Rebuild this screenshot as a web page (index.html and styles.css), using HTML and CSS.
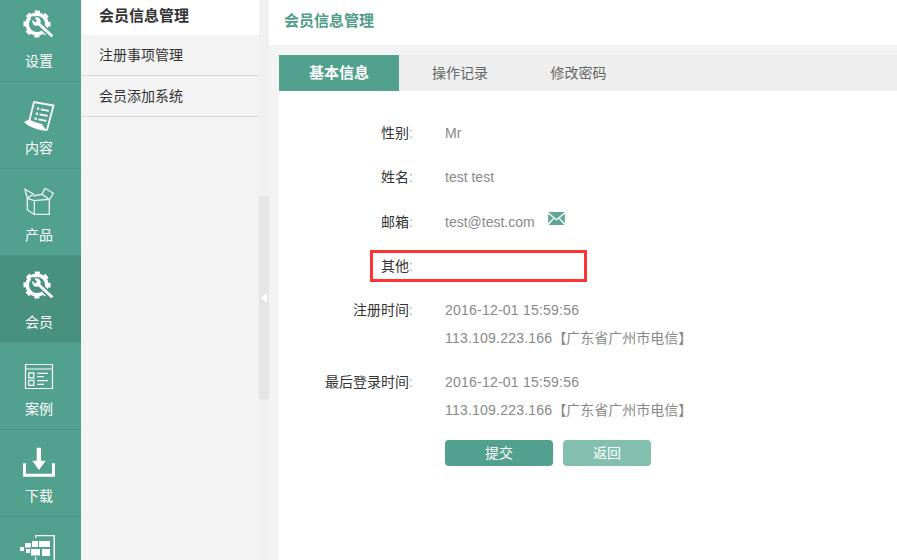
FILE: index.html
```html
<!DOCTYPE html>
<html lang="zh-CN">
<head>
<meta charset="utf-8">
<title>会员信息管理</title>
<link rel="stylesheet" href="styles.css">
</head>
<body>
<svg class="sprite" aria-hidden="true">
  <defs>
    <g id="gear">
      <circle class="gear-ring" cx="17" cy="18" r="9.800"/>
      <circle class="gear-teeth" cx="17" cy="18" r="12.200"/>
      <path class="wrench-gap" d="M19 18 33 31"/>
      <path class="wrench-handle" d="M19 18 32 30"/>
      <circle class="wrench-head" cx="16.500" cy="15.500" r="4.200"/>
      <path class="wrench-jaw" d="M10 11 13.500 10 17 15 15 16.500 Z"/>
      <circle class="wrench-end" cx="33" cy="31" r="1.200"/>
    </g>
  </defs>
</svg>
<div class="app">
  <nav class="rail">
    <ul class="rail-list">
      <li class="rail-item">
        <svg class="rail-icon" viewBox="0 0 36 40"><use href="#gear"/></svg>
        <span>设置</span>
      </li>
      <li class="rail-item">
        <svg class="rail-icon" viewBox="0 0 36 40">
          <path class="ico-line-bold" d="M9.500 27 14 9 33.500 12.500 27 37"/>
          <path class="ico-fill" d="M4 29 9 26.500C13 29 18 30 22 31 23 33 25 36 27.500 38 17 37 9 34 4 29Z"/>
          <path class="ico-fill" d="M17 14.500h2.200v2.200H17ZM21 15.500l8 1.500-.4 1.800-8-1.500ZM15.800 19.500H18v2.200h-2.200ZM19.800 20.500l8 1.500-.4 1.800-8-1.500ZM14.600 24.500h2.200v2.200h-2.200ZM18.600 25.500l8 1.500-.4 1.800-8-1.500Z"/>
        </svg>
        <span>内容</span>
      </li>
      <li class="rail-item">
        <svg class="rail-icon" viewBox="0 0 36 40">
          <path class="ico-line ico-soft" d="M7.300 18.300V30L14.300 34.300H29.300V19.300L14.300 20.600 7.300 18.300ZM14.300 20.600V34.300M5 9.300 13.300 14 7.500 18.300ZM5 9.300 7.300 18.300M13.300 16 21.700 14.300 29.300 19.300M21.700 15 25 8.300 33.300 13.300 30 19.300"/>
        </svg>
        <span>产品</span>
      </li>
      <li class="rail-item is-active">
        <svg class="rail-icon" viewBox="0 0 36 40"><use href="#gear"/></svg>
        <span>会员</span>
      </li>
      <li class="rail-item">
        <svg class="rail-icon" viewBox="0 0 36 40">
          <path class="ico-line" d="M5.500 10.500h27v24h-27ZM5.500 15h27M8.800 18.800h5v5h-5ZM8.800 26.300h5v5h-5ZM17.300 19.300H28M17.300 22.700H24M17.300 26.700H28M17.300 30.300H24"/>
        </svg>
        <span>案例</span>
      </li>
      <li class="rail-item">
        <svg class="rail-icon" viewBox="0 0 36 40">
          <path class="ico-fill" d="M16.700 6.700H21V19.700H25.700L19 29 12.300 19.700H16.700ZM3 22.300H6V32.700H32V22.300H35V35.700H3Z"/>
        </svg>
        <span>下载</span>
      </li>
      <li class="rail-item">
        <svg class="rail-icon" viewBox="0 0 36 40">
          <path class="ico-fill" d="M15 7H35V32H33.500V8.300H16.300V10H15ZM15 29H16.300V32H15ZM0 19H4V23H0ZM5 15H11V19.500H5ZM12 13H18V19H12ZM19 13H30V19H19ZM6 21H10V25H6ZM11 21H20V27.500H11ZM22 21H30V28H22Z"/>
        </svg>
      </li>
    </ul>
  </nav>

  <aside class="subnav">
    <a class="subnav-item is-current">会员信息管理</a>
    <a class="subnav-item">注册事项管理</a>
    <a class="subnav-item">会员添加系统</a>
  </aside>

  <div class="splitter">
    <div class="splitter-handle"><i class="splitter-arrow"></i></div>
  </div>

  <main class="main">
    <header class="page-title">会员信息管理</header>
    <section class="panel">
      <div class="tabs">
        <a class="tab tab-basic is-current">基本信息</a>
        <a class="tab tab-log">操作记录</a>
        <a class="tab tab-pass">修改密码</a>
      </div>
      <div class="form">
        <div class="row"><label class="label">性别<em>:</em></label><div class="value">Mr</div></div>
        <div class="row row-shift"><label class="label">姓名<em>:</em></label><div class="value">test test</div></div>
        <div class="row"><label class="label">邮箱<em>:</em></label><div class="value">test@test.com<svg class="mail" viewBox="0 0 18 14"><path d="M0 0h18L9 7.500Z"/><path d="M0 1.800 5.500 6.500 0 12ZM18 1.800 12.500 6.500 18 12ZM6.500 7.400 9 9.500 11.500 7.400 17.500 14H.5Z"/></svg></div></div>
        <div class="row is-flagged"><label class="label">其他<em>:</em></label><div class="value"></div></div>
        <div class="row row-double"><label class="label">注册时间<em>:</em></label><div class="value"><p><span class="num">2016-12-01 15:59:56</span></p><p><span class="num">113.109.223.166</span>【广东省广州市电信】</p></div></div>
        <div class="row row-double"><label class="label">最后登录时间<em>:</em></label><div class="value"><p><span class="num">2016-12-01 15:59:56</span></p><p><span class="num">113.109.223.166</span>【广东省广州市电信】</p></div></div>
        <div class="actions">
          <button class="btn btn-primary">提交</button>
          <button class="btn btn-secondary">返回</button>
        </div>
      </div>
    </section>
  </main>
</div>
</body>
</html>
```

FILE: styles.css
```css
*, *::after { box-sizing: border-box; }
html, body { margin: 0; height: 100%; overflow: hidden; }
body { font-family: "Liberation Sans", "Noto Sans CJK SC", sans-serif; font-size: 14px; background: #fff; }
.sprite { display: none; }
.app { display: flex; height: 560px; overflow: hidden; }

.rail { flex: 0 0 81px; background: #52a18e; overflow: hidden; }
.rail-list { list-style: none; margin: -5px 0 0; padding: 0; }
.rail-item { --rail-bg: #52a18e; height: 87px; display: flex; flex-direction: column; align-items: center; padding-top: 11px; color: #fff; font-size: 14px; line-height: 20px; border-bottom: 1px solid #4a9683; }
.rail-item span { margin-top: 5px; margin-left: -3px; }
.rail-icon { width: 36px; height: 40px; margin-left: -5px; display: block; flex: none; }
.rail-item.is-active { --rail-bg: #47917e; background: #47917e; border-bottom-color: #4e9c89; }

.ico-fill { fill: #fff; }
.ico-line { fill: none; stroke: #fff; stroke-width: 1.200; }
.ico-soft { stroke-width: 1.300; stroke-opacity: .88; }
.ico-line-bold { fill: none; stroke: #fff; stroke-width: 1.800; }

.gear-ring { fill: none; stroke: #fff; stroke-width: 3.600; }
.gear-teeth { fill: none; stroke: #fff; stroke-width: 2.800; stroke-dasharray: 5 4.580; stroke-dashoffset: 2.500; }
.wrench-gap { fill: none; stroke: var(--rail-bg); stroke-width: 6; stroke-linecap: round; }
.wrench-handle { fill: none; stroke: #fff; stroke-width: 3; stroke-linecap: round; }
.wrench-head { fill: #fff; }
.wrench-jaw { fill: var(--rail-bg); }
.wrench-end { fill: var(--rail-bg); }

.subnav { flex: 0 0 178px; background: #f3f3f3; display: flex; flex-direction: column; }
.subnav-item { display: block; height: 41px; padding: 0 18px; font-size: 14px; line-height: 41px; color: #333; border-bottom: 1px solid #d9d9d9; }
.subnav-item.is-current { height: 35px; font-size: 15px; line-height: 31px; background: #fff; font-weight: 700; border-bottom: 0; }

.splitter { flex: 0 0 10px; background: #f0f0f0; display: flex; align-items: center; height: 596px; }
.splitter-handle { width: 10px; height: 202px; background: #e4e4e4; display: flex; align-items: center; }
.splitter-arrow { display: block; margin-left: 2px; width: 0; height: 0; border-style: solid; border-width: 5px 6px 5px 0; border-color: transparent #fff transparent transparent; }

.main { flex: 1; background: #f3f3f3; min-width: 0; }
.page-title { height: 45px; padding-left: 15px; background: #fff; color: #4f9c89; font-size: 15px; font-weight: 700; line-height: 41px; }
.panel { margin: 10px 0 0 10px; background: #fff; height: 505px; }

.tabs { display: flex; height: 36px; background: #eee; }
.tab { text-align: center; line-height: 36px; font-size: 14px; color: #666; }
.tab-basic { width: 120px; }
.tab-log { width: 122px; }
.tab-pass { width: 115px; }
.tab.is-current { background: #52a18e; color: #fff; font-size: 15px; font-weight: 700; }

.form { padding-top: 20px; }
.row { display: flex; position: relative; height: 44px; line-height: 44px; }
.row-shift { height: 45px; }
.row-double { height: 72px; padding-top: 8px; }
.label { width: 134px; text-align: right; font-size: 14px; color: #333; }
.label em { font-style: normal; color: #aaa; }
.value { margin-left: 32px; color: #888; }
.value p { margin: 0; height: 28px; line-height: 28px; }
.num { letter-spacing: .22px; }
.row-double .label { line-height: 28px; }
.row.is-flagged::after { content: ""; position: absolute; left: 91px; top: 6px; width: 217px; height: 32px; border: 3px solid #f33; }
.mail { width: 17px; height: 13px; margin-left: 13px; position: relative; top: -2px; fill: #5ea795; }

.actions { display: flex; gap: 10px; padding-left: 166px; margin-top: 8px; }
.btn { height: 26px; border: 0; border-radius: 4px; padding: 0; color: #fff; font: 14px/26px "Liberation Sans", "Noto Sans CJK SC", sans-serif; }
.btn-primary { width: 108px; background: #52a18e; }
.btn-secondary { width: 88px; background: #83bfae; }
```
